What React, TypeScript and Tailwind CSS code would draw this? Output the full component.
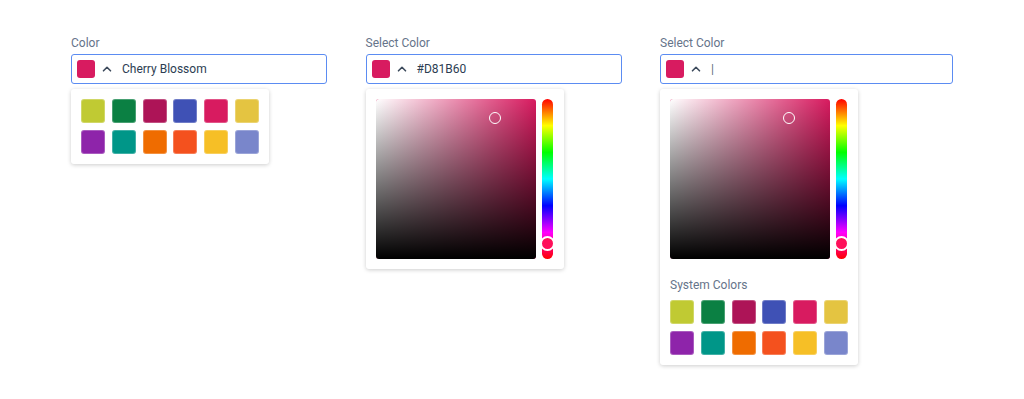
import React from 'react';

const SYSTEM_COLORS = [
  '#C0CA33', '#0B8043', '#AD1457', '#3F51B5', '#D81B60', '#E4C441',
  '#8E24AA', '#009688', '#EF6C00', '#F4511E', '#F6BF26', '#7986CB',
];

function Chevron() {
  return (
    <svg width="10" height="10" viewBox="0 0 10 10" className="shrink-0">
      <path d="M1.5 6.8 L5 3.3 L8.5 6.8" fill="none" stroke="#3c4a5c" strokeWidth="1.6" strokeLinecap="round" strokeLinejoin="round" />
    </svg>
  );
}

function ColorInput({ label, value, width, cursor }: { label: string; value?: string; width: string; cursor?: boolean }) {
  return (
    <div className={width}>
      <div className="text-[12px] leading-4 text-[#66748a] mb-[3px]">{label}</div>
      <div className="h-[30px] flex items-center border border-[#5b8cf2] rounded-[3px] pl-[5px] bg-white">
        <div className="w-[18px] h-[18px] rounded-[3px] bg-[#D81B60] shrink-0" />
        <div className="ml-[7px]">
          <Chevron />
        </div>
        {cursor ? (
          <span className="ml-[10px] text-[12px] text-[#5f6d80]">|</span>
        ) : (
          <span className="ml-[10px] text-[12px] text-[#2c3d52]">{value}</span>
        )}
      </div>
    </div>
  );
}

function Swatches() {
  return (
    <div className="grid grid-cols-6 gap-[6.8px] w-[178px]">
      {SYSTEM_COLORS.map((c) => (
        <div
          key={c}
          className="w-6 h-6 rounded-[3px] border border-white/25"
          style={{ backgroundColor: c }}
        />
      ))}
    </div>
  );
}

function Picker() {
  return (
    <div className="flex gap-[6px]">
      <div className="relative w-[160px] h-[160px] rounded-[3px] overflow-hidden bg-[#D81B60]">
        <div className="absolute inset-0 bg-[linear-gradient(to_right,#ffffff,rgba(255,255,255,0))]" />
        <div className="absolute inset-0 bg-[linear-gradient(to_top,#000000,rgba(0,0,0,0))]" />
        <div className="absolute left-[113px] top-[13px] w-3 h-3 rounded-full border-[1.5px] border-white" />
      </div>
      <div className="relative w-[11px] h-[160px] rounded-full bg-[linear-gradient(to_bottom,#ff0000,#ffff00,#00ff00,#00ffff,#0000ff,#ff00ff,#ff0000)]">
        <div className="absolute left-[-2px] top-[137px] w-[15px] h-[15px] rounded-full bg-[#ff0f5a] border-2 border-white" />
      </div>
    </div>
  );
}

function Panel({ children }: { children: React.ReactNode }) {
  return (
    <div className="mt-[5px] w-[198px] bg-white rounded-[3px] p-[10px] shadow-[0_1px_4px_rgba(0,0,0,0.2)]">
      {children}
    </div>
  );
}

export default function App() {
  return (
    <div className="w-[1024px] h-[399px] bg-white pl-[71px] pt-[35px] flex gap-[38.5px]" style={{ fontFamily: 'Roboto, sans-serif' }}>
      <div>
        <ColorInput label="Color" value="Cherry Blossom" width="w-[256px]" />
        <Panel>
          <Swatches />
        </Panel>
      </div>
      <div>
        <ColorInput label="Select Color" value="#D81B60" width="w-[256px]" />
        <Panel>
          <Picker />
        </Panel>
      </div>
      <div>
        <ColorInput label="Select Color" cursor width="w-[293px]" />
        <Panel>
          <Picker />
          <div className="mt-[18px] mb-[7px] text-[12px] leading-4 text-[#66748a]">System Colors</div>
          <Swatches />
        </Panel>
      </div>
    </div>
  );
}
